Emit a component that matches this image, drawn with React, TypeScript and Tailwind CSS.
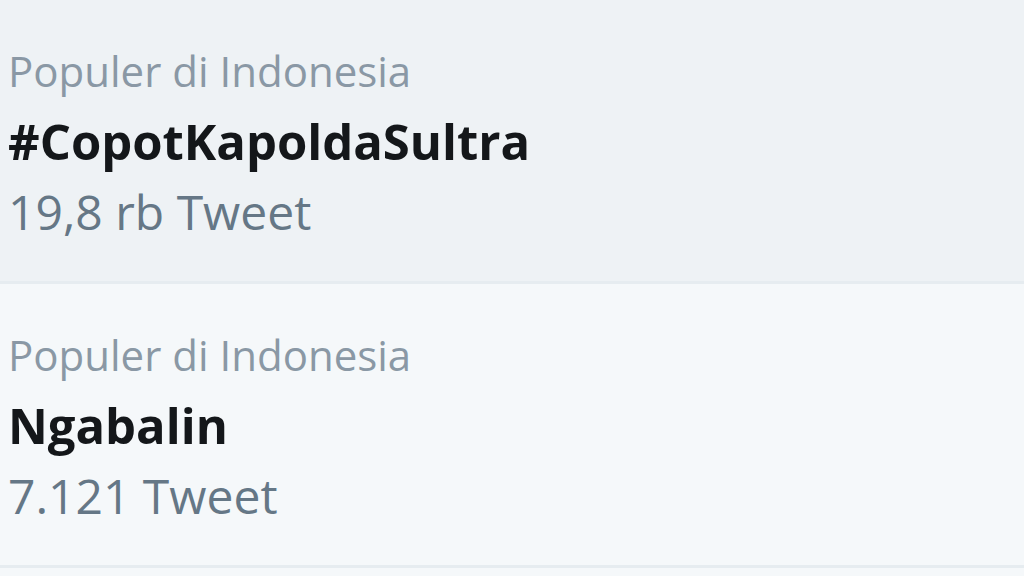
const trends = [
  { context: 'Populer di Indonesia', name: '#CopotKapoldaSultra', count: '19,8 rb Tweet', hover: true },
  { context: 'Populer di Indonesia', name: 'Ngabalin', count: '7.121 Tweet', hover: false },
];

export default function App() {
  return (
    <div className="w-[1024px] h-[576px] overflow-hidden bg-[#f5f8fa]" style={{ fontFamily: '"Open Sans", "Noto Sans", sans-serif' }}>
      {trends.map((t) => (
        <div
          key={t.name}
          className={`px-[8px] pt-[36px] pb-[33px] border-b-[3px] border-[#e6ecf0] ${t.hover ? 'bg-[#eef2f5]' : 'bg-[#f5f8fa]'}`}
        >
          <div className="text-[42px] leading-[70px] text-[#8a98a5]">{t.context}</div>
          <div className="text-[49px] leading-[70px] font-bold text-[#14171a]">{t.name}</div>
          <div className="text-[48px] leading-[72px] text-[#657786]">{t.count}</div>
        </div>
      ))}
    </div>
  );
}
